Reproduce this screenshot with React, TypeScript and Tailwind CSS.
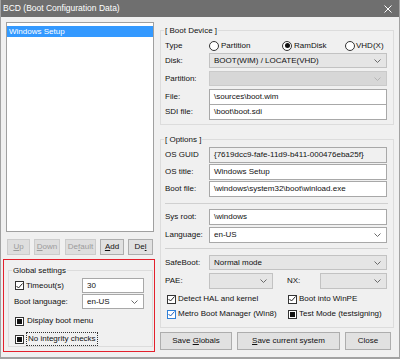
import type { ReactNode } from 'react';

type Tone = 'white' | 'gray' | 'off';

function Chevron({ light }: { light?: boolean }) {
  return (
    <svg width="7" height="4" viewBox="0 0 7 4" className="shrink-0">
      <polyline points="0.5,0.5 3.5,3.5 6.5,0.5" fill="none" stroke={light ? '#b4b4b4' : '#6a6a6a'} strokeWidth="1" />
    </svg>
  );
}

function Combo({ text, tone, className }: { text?: string; tone: Tone; className: string }) {
  const look =
    tone === 'white'
      ? 'bg-white border-[#a8a8a8]'
      : tone === 'gray'
      ? 'bg-[#e5e5e5] border-[#c2c2c2]'
      : 'bg-[#d7d7d7] border-[#cacaca]';
  return (
    <div className={`flex items-center justify-between border pl-[4px] pr-[5px] ${look} ${className}`}>
      <span className="truncate">{text}</span>
      <Chevron light={tone === 'off'} />
    </div>
  );
}

function Field({ text, className, readOnly }: { text: string; className: string; readOnly?: boolean }) {
  return (
    <div className={`flex items-center border border-[#a8a8a8] pl-[4px] ${readOnly ? 'bg-[#f0f0f0]' : 'bg-white'} ${className}`}>
      {text}
    </div>
  );
}

function Check({ state, blue }: { state: 'on' | 'off' | 'mixed'; blue?: boolean }) {
  return (
    <span
      className={`flex h-[9px] w-[9px] shrink-0 items-center justify-center border bg-white ${
        blue ? 'border-[#2f80d8]' : 'border-[#333333]'
      }`}
    >
      {state === 'on' && (
        <svg width="7" height="6" viewBox="0 0 7 6">
          <polyline points="0.5,3 2.5,5 6.5,0.5" fill="none" stroke={blue ? '#1d5fbf' : '#222222'} strokeWidth="1" />
        </svg>
      )}
      {state === 'mixed' && <span className="h-[5px] w-[5px] bg-[#111111]" />}
    </span>
  );
}

function Radio({ on }: { on?: boolean }) {
  return (
    <span className="flex h-[10px] w-[10px] shrink-0 items-center justify-center rounded-full border border-[#333333] bg-white">
      {on && <span className="h-[5px] w-[5px] rounded-full bg-[#111111]" />}
    </span>
  );
}

function Group({ title, className, children }: { title: string; className: string; children: ReactNode }) {
  return (
    <div className={`relative flex flex-col border border-[#dcdcdc] ${className}`}>
      <span className="absolute -top-[5px] left-[3px] bg-[#f0f0f0] px-[1px] leading-[9px]">{title}</span>
      {children}
    </div>
  );
}

function Btn({ children, off, className }: { children: ReactNode; off?: boolean; className: string }) {
  return (
    <div
      className={`flex items-center justify-center border ${
        off ? 'border-[#cccccc] bg-[#dedede] text-[#9c9c9c]' : 'border-[#adadad] bg-[#e1e1e1]'
      } ${className}`}
    >
      <span>{children}</span>
    </div>
  );
}

function Label({ children }: { children: ReactNode }) {
  return <span className="w-[44px] shrink-0">{children}</span>;
}

export default function App() {
  return (
    <div className="flex h-[359px] w-[400px] flex-col overflow-hidden border-x border-b-2 border-[#a2a2a2] bg-[#f0f0f0] font-['Liberation_Sans',Arial,sans-serif] text-[8px] leading-none text-[#111111]">
      {/* Title bar */}
      <div className="flex h-[17px] shrink-0 items-center justify-between bg-[#6f6f6f] pl-[2px] pr-[7px] text-[8.5px] text-white">
        <span>BCD (Boot Configuration Data)</span>
        <svg width="8" height="8" viewBox="0 0 8 8">
          <path d="M0.5 0.5 L7.5 7.5 M7.5 0.5 L0.5 7.5" stroke="#ffffff" strokeWidth="1" />
        </svg>
      </div>

      <div className="flex flex-1">
        {/* Left column */}
        <div className="ml-[2px] flex w-[152px] flex-col">
          <div className="ml-[3px] mt-[5px] h-[210px] w-[148px] border border-[#a0a0a0] bg-white pt-[3px]">
            <div className="flex h-[11px] items-center bg-[#3399ff] pl-[2px] text-white">Windows Setup</div>
          </div>

          <div className="ml-[4px] mt-[7px] flex h-[16px]">
            <Btn off className="w-[23px]">
              <u>U</u>p
            </Btn>
            <Btn off className="ml-[4px] w-[26px]">
              <u>D</u>own
            </Btn>
            <Btn off className="ml-[5px] w-[31px]">
              De<u>f</u>ault
            </Btn>
            <Btn className="ml-[4px] w-[24px]">
              <u>A</u>dd
            </Btn>
            <Btn className="ml-[4px] w-[25px]">
              De<u>l</u>
            </Btn>
          </div>

          <div className="mt-[4px] flex h-[93px] w-[152px] flex-col border border-[#e3202c]">
            <Group title="Global settings" className="ml-[4px] mt-[10px] h-[77px] w-[145px]">
              <div className="mt-[7px] flex h-[15px] items-center pl-[6px]">
                <div className="flex w-[67px] items-center gap-[2px]">
                  <Check state="on" />
                  <span>Timeout(s)</span>
                </div>
                <Field text="30" className="h-[15px] w-[62px]" />
              </div>
              <div className="mt-[1px] flex h-[15px] items-center pl-[5px]">
                <span className="w-[68px] shrink-0">Boot language:</span>
                <Combo text="en-US" tone="white" className="h-[15px] w-[62px]" />
              </div>
              <div className="mt-[6px] flex h-[12px] items-center gap-[3px] pl-[6px]">
                <Check state="mixed" />
                <span>Display boot menu</span>
              </div>
              <div className="mt-[6px] flex h-[12px] items-center gap-[2px] pl-[6px]">
                <Check state="mixed" />
                <span className="border border-dotted border-[#333333] px-[1px] py-[2px]">No integrity checks</span>
              </div>
            </Group>
          </div>
        </div>

        {/* Right column */}
        <div className="ml-[5px] flex w-[234px] flex-col">
          <Group title="[ Boot Device ]" className="mt-[13px] h-[95px] pl-[4px]">
            <div className="mt-[7px] flex h-[15px] items-center">
              <Label>Type</Label>
              <div className="flex w-[73px] items-center gap-[2px]">
                <Radio />
                <span>Partition</span>
              </div>
              <div className="flex w-[63px] items-center gap-[2px]">
                <Radio on />
                <span>RamDisk</span>
              </div>
              <div className="flex items-center gap-[1px]">
                <Radio />
                <span>VHD(X)</span>
              </div>
            </div>
            <div className="flex h-[15px] items-center">
              <Label>Disk:</Label>
              <Combo text="BOOT(WIM) / LOCATE(VHD)" tone="gray" className="h-[15px] w-[178px]" />
            </div>
            <div className="mt-[3px] flex h-[15px] items-center">
              <Label>Partition:</Label>
              <Combo tone="off" className="h-[15px] w-[178px]" />
            </div>
            <div className="mt-[3px] flex h-[16px] items-center">
              <Label>File:</Label>
              <Field text="\sources\boot.wim" className="h-[16px] w-[178px]" />
            </div>
            <div className="-mt-px flex h-[16px] items-center">
              <Label>SDI file:</Label>
              <Field text="\boot\boot.sdi" className="h-[16px] w-[178px]" />
            </div>
          </Group>

          <Group title="[ Options ]" className="mt-[14px] h-[189px] pl-[4px]">
            <div className="mt-[7px] flex h-[16px] items-center">
              <Label>OS GUID</Label>
              <Field readOnly text="{7619dcc9-fafe-11d9-b411-000476eba25f}" className="h-[16px] w-[178px]" />
            </div>
            <div className="mt-[1px] flex h-[16px] items-center">
              <Label>OS title:</Label>
              <Field text="Windows Setup" className="h-[16px] w-[178px]" />
            </div>
            <div className="mt-[1px] flex h-[16px] items-center">
              <Label>Boot file:</Label>
              <Field text="\windows\system32\boot\winload.exe" className="h-[16px] w-[178px]" />
            </div>
            <div className="mr-[5px] mt-[6px] h-px bg-[#d0d0d0]" />
            <div className="mt-[5px] flex h-[16px] items-center">
              <Label>Sys root:</Label>
              <Field text="\windows" className="h-[16px] w-[178px]" />
            </div>
            <div className="mt-[2px] flex h-[16px] items-center">
              <Label>Language:</Label>
              <Combo text="en-US" tone="white" className="h-[16px] w-[178px]" />
            </div>
            <div className="mr-[5px] mt-[5px] h-px bg-[#d0d0d0]" />
            <div className="mt-[6px] flex h-[15px] items-center">
              <Label>SafeBoot:</Label>
              <Combo text="Normal mode" tone="gray" className="h-[15px] w-[178px]" />
            </div>
            <div className="mt-[3px] flex h-[16px] items-center">
              <Label>PAE:</Label>
              <Combo tone="gray" className="h-[16px] w-[64px]" />
              <span className="ml-[14px] w-[33px]">NX:</span>
              <Combo tone="gray" className="h-[16px] w-[67px]" />
            </div>
            <div className="ml-[2px] mt-[4px] flex h-[12px] items-center">
              <div className="flex w-[121px] items-center gap-[2px]">
                <Check state="on" />
                <span>Detect HAL and kernel</span>
              </div>
              <div className="flex items-center gap-[2px]">
                <Check state="on" />
                <span>Boot into WinPE</span>
              </div>
            </div>
            <div className="ml-[2px] mt-[3px] flex h-[12px] items-center">
              <div className="flex w-[121px] items-center gap-[2px]">
                <Check state="on" blue />
                <span>Metro Boot Manager (Win8)</span>
              </div>
              <div className="flex items-center gap-[2px]">
                <Check state="mixed" />
                <span>Test Mode (testsigning)</span>
              </div>
            </div>
          </Group>

          <div className="mt-[4px] flex h-[18px]">
            <Btn className="w-[72px]">
              Save <u>G</u>lobals
            </Btn>
            <Btn className="ml-[5px] w-[103px]">
              <u>S</u>ave current system
            </Btn>
            <Btn className="ml-[5px] w-[46px]">Close</Btn>
          </div>
        </div>
      </div>
    </div>
  );
}
